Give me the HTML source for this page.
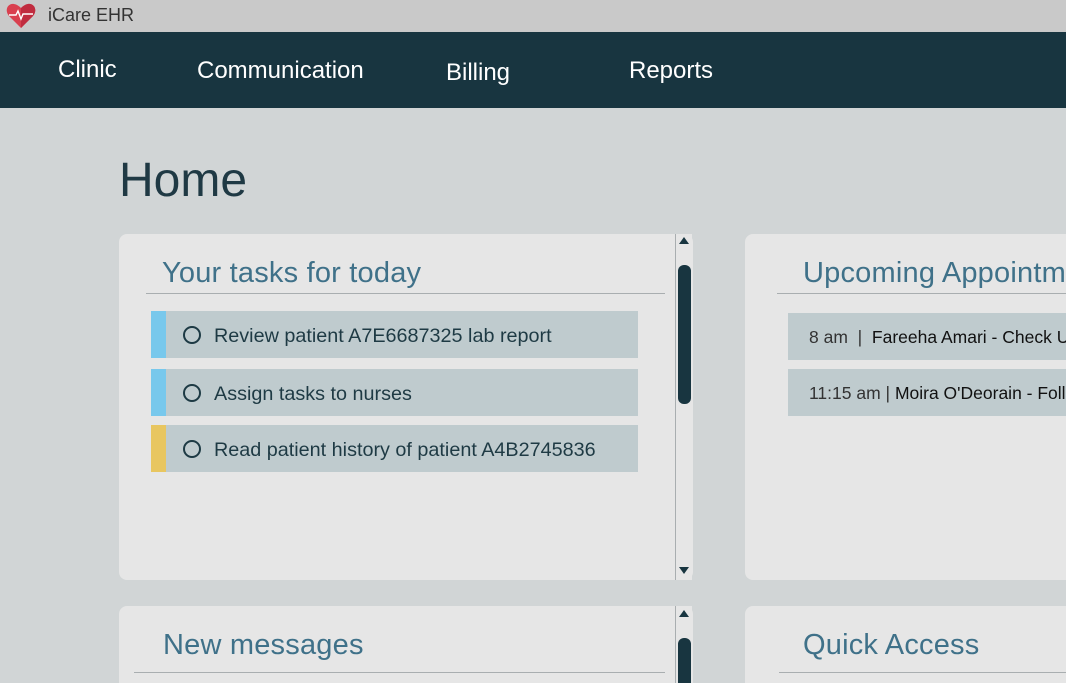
<!DOCTYPE html>
<html style="overflow:hidden;width:1066px;height:683px"><head><meta charset="utf-8"><style>
*{margin:0;padding:0;box-sizing:border-box}
body{width:1066px;height:683px;overflow:hidden;background:#d1d5d6;font-family:"Liberation Sans",sans-serif;position:relative}
.abs{position:absolute}
.tb{left:0;top:0;width:1066px;height:32px;background:#c9c9c9}
.nav{left:0;top:32px;width:1066px;height:76px;background:#183540}
.nav span{position:absolute;color:#fff;font-size:24px;top:24px}
.card{background:#e6e6e6;border-radius:8px}
.h{color:#3f7189;font-size:29px;font-weight:300;letter-spacing:0.2px;white-space:nowrap}
.line{height:1px;background:#a9aeb0}
.item{background:#bfcbce;height:47px}
.item .bar{position:absolute;left:0;top:0;width:15px;height:47px}
.item .c{position:absolute;left:32px;top:15px;width:18px;height:18px;border:2px solid #1d3a44;border-radius:50%}
.item .t{position:absolute;left:63px;top:14px;font-size:19.8px;color:#1e3a44;white-space:nowrap}
.sb{width:17px;border-left:1px solid #a9aeb0;background:#e6e6e6}
.thumb{background:#183540;border-radius:6px;width:13px}
.ap{background:#bfcbce;height:47px;width:278px;overflow:hidden}
.ap span{position:absolute;left:21px;top:14px;font-size:17.5px;white-space:nowrap;color:#111}
.ap span i{font-style:normal;color:#333;font-weight:300}
</style></head><body>
<div class="abs tb"></div>
<svg class="abs" style="left:6px;top:3px" width="30" height="26" viewBox="0 0 30 26"><path d="M15 25 L3 13 C-2 7 2 0 8 1 C11 1.5 13 3 15 5 C17 3 19 1.5 22 1 C28 0 32 7 27 13 Z" fill="#d9404f"/><path d="M15 25 L27 13 C32 7 28 0 22 1 C19 1.5 17 3 15 5Z" fill="#c02c3f"/><path d="M3 12 H10 L12 8 L15 16 L17 11 H27" stroke="#fff" stroke-width="1.4" fill="none"/></svg>
<div class="abs" style="left:48px;top:5px;font-size:18px;color:#333">iCare EHR</div>
<div class="abs nav"><span style="left:58px;top:24px">Clinic</span><span style="left:197px;top:25px">Communication</span><span style="left:446px;top:27px">Billing</span><span style="left:629px;top:25px">Reports</span></div>
<div class="abs" style="left:119px;top:153px;font-size:48px;color:#1f3944;font-weight:300">Home</div>

<div class="abs card" style="left:119px;top:234px;width:574px;height:346px"></div>
<div class="abs h" style="left:162px;top:257px">Your tasks for today</div>
<div class="abs line" style="left:146px;top:293px;width:519px"></div>
<div class="abs item" style="left:151px;top:311px;width:487px"><div class="bar" style="background:#78c8ec"></div><div class="c"></div><div class="t">Review patient A7E6687325 lab report</div></div>
<div class="abs item" style="left:151px;top:369px;width:487px"><div class="bar" style="background:#78c8ec"></div><div class="c"></div><div class="t">Assign tasks to nurses</div></div>
<div class="abs item" style="left:151px;top:425px;width:487px"><div class="bar" style="background:#e8c660"></div><div class="c"></div><div class="t">Read patient history of patient A4B2745836</div></div>
<div class="abs sb" style="left:675px;top:234px;height:346px"></div>
<div class="abs" style="left:679px;top:237px;width:0;height:0;border-left:5px solid transparent;border-right:5px solid transparent;border-bottom:7px solid #183540"></div>
<div class="abs thumb" style="left:678px;top:265px;height:139px"></div>
<div class="abs" style="left:679px;top:567px;width:0;height:0;border-left:5px solid transparent;border-right:5px solid transparent;border-top:7px solid #183540"></div>

<div class="abs card" style="left:745px;top:234px;width:321px;height:346px;border-radius:8px 0 0 8px"></div>
<div class="abs h" style="left:803px;top:257px;width:263px;overflow:hidden">Upcoming Appointments</div>
<div class="abs line" style="left:777px;top:293px;width:289px"></div>
<div class="abs ap" style="left:788px;top:313px"><span><i>8 am &nbsp;|&nbsp; </i>Fareeha Amari - Check Up</span></div>
<div class="abs ap" style="left:788px;top:369px"><span><i>11:15 am | </i>Moira O'Deorain - Follow Up</span></div>

<div class="abs card" style="left:119px;top:606px;width:574px;height:77px;border-radius:8px 8px 0 0"></div>
<div class="abs h" style="left:163px;top:629px">New messages</div>
<div class="abs line" style="left:134px;top:672px;width:531px"></div>
<div class="abs sb" style="left:675px;top:606px;height:77px"></div>
<div class="abs" style="left:679px;top:610px;width:0;height:0;border-left:5px solid transparent;border-right:5px solid transparent;border-bottom:7px solid #183540"></div>
<div class="abs thumb" style="left:678px;top:638px;height:45px;border-radius:6px 6px 0 0"></div>

<div class="abs card" style="left:745px;top:606px;width:321px;height:77px;border-radius:8px 0 0 0"></div>
<div class="abs h" style="left:803px;top:629px">Quick Access</div>
<div class="abs line" style="left:779px;top:672px;width:287px"></div>
</body></html>
